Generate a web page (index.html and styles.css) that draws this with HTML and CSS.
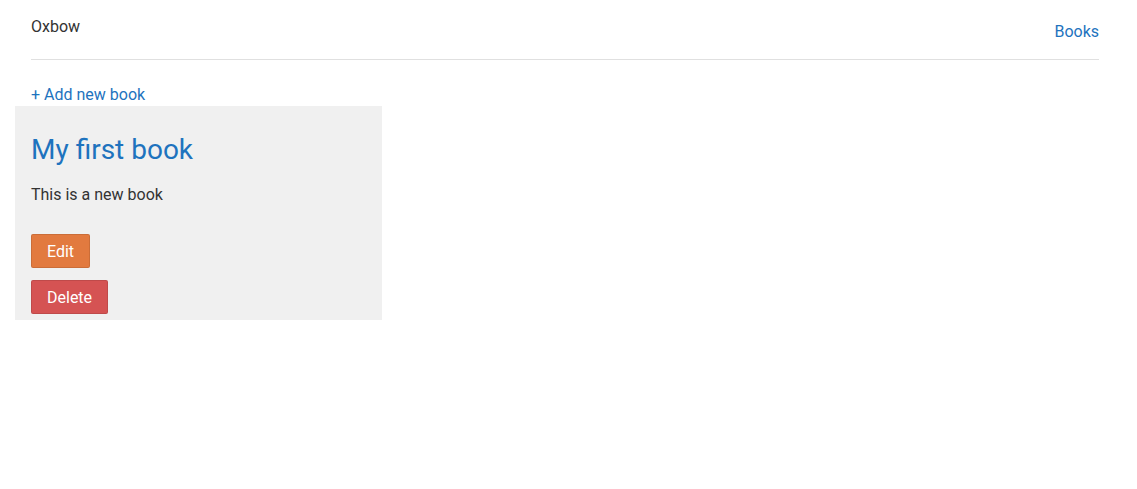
FILE: index.html
```html
<!DOCTYPE html>
<html lang="en">
<head>
    <meta charset="UTF-8">
    <meta name="viewport" content="width=device-width, initial-scale=1.0">
    <title>Oxbow</title>
    <link rel="stylesheet" href="styles.css">
</head>
<body>
    <div class="page">
        <header class="site-header">
            <div class="brand">Oxbow</div>
            <nav class="nav">
                <a href="#">Books</a>
            </nav>
        </header>

        <a class="add-link" href="#">+ Add new book</a>

        <div class="book-list">
            <div class="book-card">
                <h2><a href="#">My first book</a></h2>
                <p>This is a new book</p>
                <div class="actions">
                    <button class="btn btn-edit">Edit</button>
                    <button class="btn btn-delete">Delete</button>
                </div>
            </div>
        </div>
    </div>
</body>
</html>
```

FILE: styles.css
```css
body {
    font-family: Roboto, 'Noto Sans', sans-serif;
    font-size: 16px;
    color: #333;
    background-color: #fff;
    margin: 0;
}

a {
    color: #1e73be;
    text-decoration: none;
}

.page {
    padding: 0 38px 0 31px;
}

/* Header with brand on the left, nav on the right */
.site-header {
    display: flex;
    justify-content: space-between;
    height: 59px;
    border-bottom: 1px solid #e0e0e0;
}

.brand {
    padding-top: 17px;
}

.nav {
    padding-top: 22px;
}

.add-link {
    display: inline-block;
    margin-top: 25px;
    line-height: 20px;
    vertical-align: top;
}

/* Book cards */
.book-list {
    display: flex;
    margin-left: -16px;
    margin-top: 1px;
}

.book-card {
    width: 335px;
    background-color: #f0f0f0;
    padding: 16px;
}

.book-card h2 {
    font-size: 28px;
    font-weight: 400;
    margin: 11px 0 0;
    line-height: 34px;
}

.book-card p {
    margin: 18px 0 0;
    line-height: 20px;
}

.actions {
    display: flex;
    flex-direction: column;
    align-items: flex-start;
    gap: 12px;
    margin-top: 29px;
    margin-bottom: -10px;
}

.btn {
    font-family: inherit;
    font-size: 16px;
    color: #fff;
    border: 1px solid rgba(0, 0, 0, 0.1);
    border-radius: 2px;
    padding: 0 15px;
    height: 34px;
    cursor: pointer;
}

.btn-edit {
    background-color: #e27a3f;
}

.btn-delete {
    background-color: #d55353;
}
```
